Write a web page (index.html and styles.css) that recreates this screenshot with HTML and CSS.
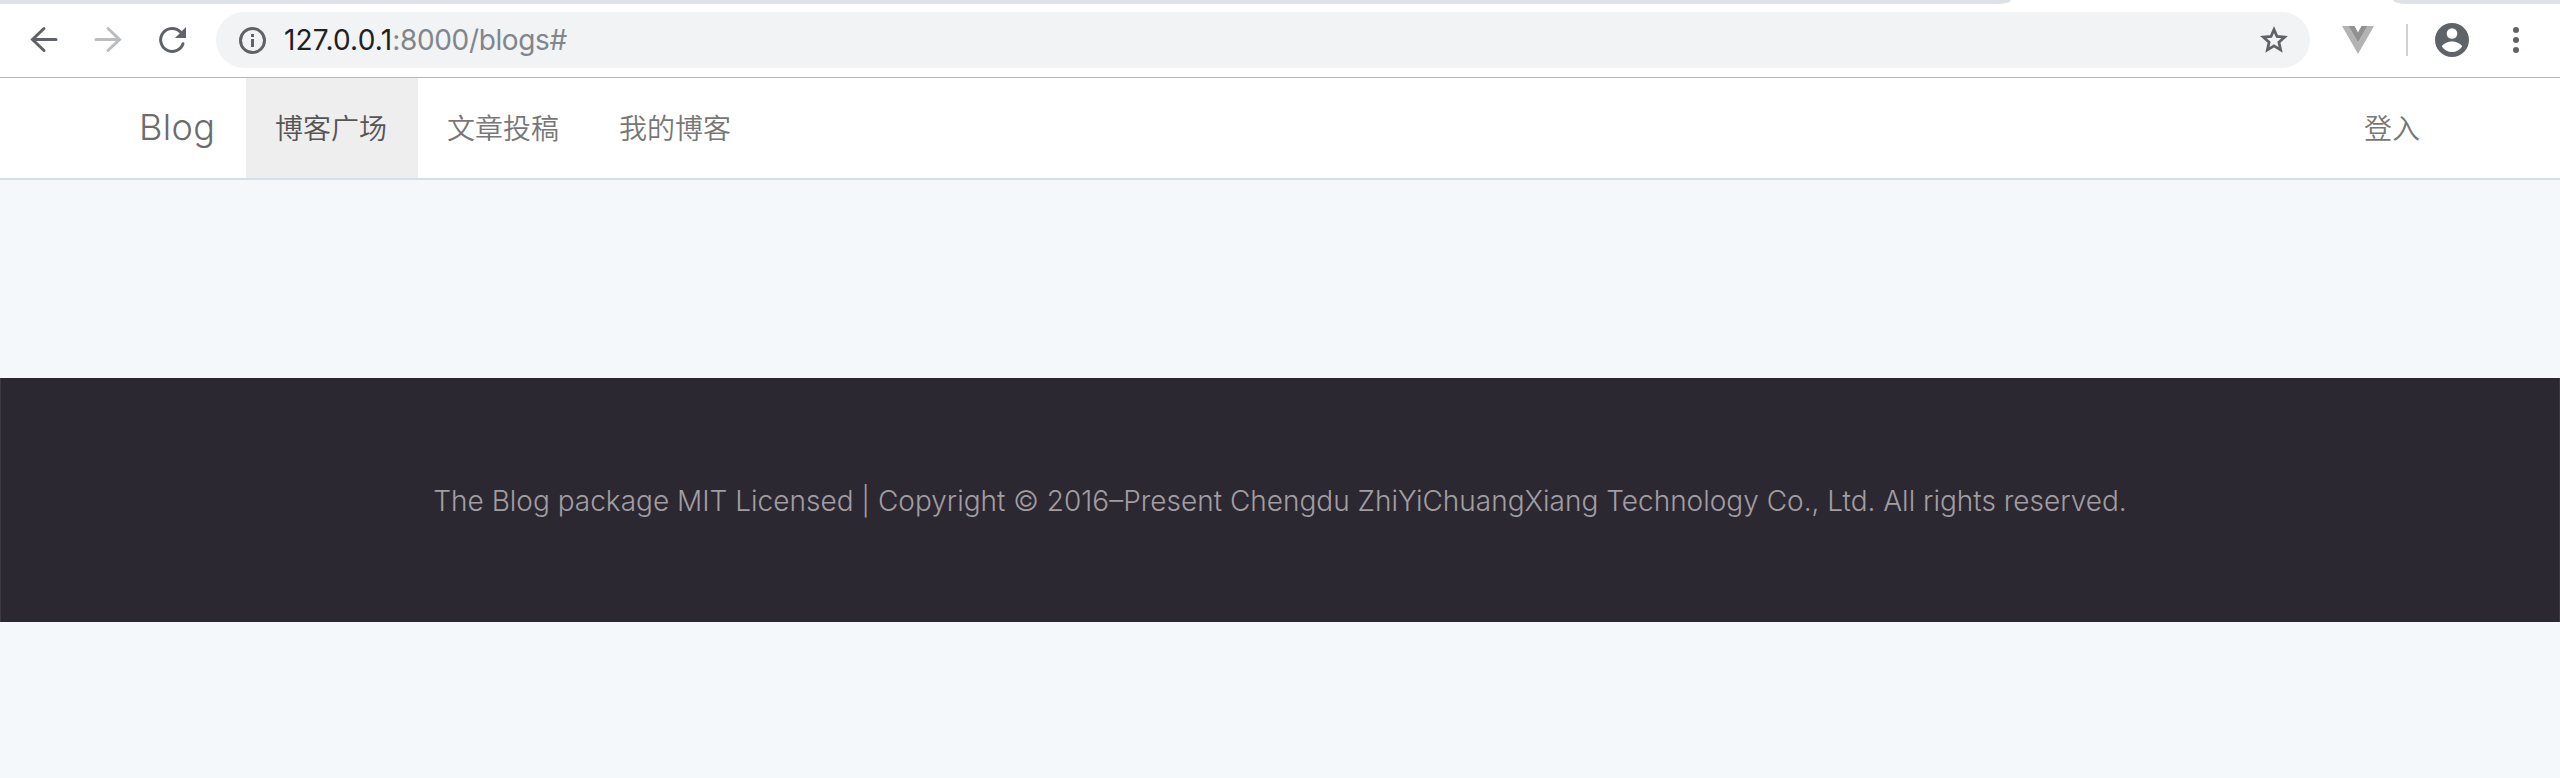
FILE: index.html
```html
<!DOCTYPE html>
<html lang="zh-CN">
<head>
<meta charset="utf-8">
<title>Blog</title>
<link rel="stylesheet" href="styles.css">
</head>
<body>
<header class="browser">
  <div class="tabstrip"><span class="tabs-left"></span><span class="tabs-right"></span></div>
  <div class="toolbar">
    <svg class="icon back" viewBox="0 0 32 32"><path d="M28 15.500H5M16 4.500l-11.500 11 11.500 11"/></svg>
    <svg class="icon forward" viewBox="0 0 32 32"><path d="M4 15.500h23M16 4.500l11.500 11-11.500 11"/></svg>
    <svg class="icon reload" viewBox="0 0 32 32"><path d="M27 19.700A11.500 11.500 0 1 1 24.500 8"/><path class="solid" d="M30 3v11H19z"/></svg>
    <div class="omnibox">
      <svg class="info" viewBox="0 0 32 32"><circle cx="16.500" cy="16.500" r="12"/><path d="M16.500 15v8M16.500 10v3"/></svg>
      <span class="url"><span class="host">127.0.0.1</span><span class="path">:8000/blogs#</span></span>
      <svg class="star" viewBox="0 0 32 32"><path d="m16 5.500 3 7 7.600.7-5.700 5.100 1.700 7.600-6.600-4-6.600 4 1.700-7.600-5.700-5.100 7.600-.7z"/></svg>
    </div>
    <svg class="vue" viewBox="0 0 32 28"><path fill="#b3b3b3" d="M0 0h6.500L16 16.500 25.500 0H32L16 28z"/><path fill="#919191" d="M6.500 0h6L16 6.500 19.500 0h6L16 16.500z"/></svg>
    <span class="divider"></span>
    <svg class="avatar" viewBox="0 0 34 34"><circle cx="17" cy="17" r="17" fill="#5f6368"/><circle cx="17" cy="10.500" r="5.300" fill="#fff"/><path fill="#fff" d="M6.800 23.500c2-3.500 6.400-5 10.200-5s8.200 1.500 10.200 5c-2.300 3.500-6 5.500-10.200 5.500s-7.900-2-10.200-5.500z"/></svg>
    <svg class="menu" viewBox="0 0 6 26"><circle cx="3" cy="3" r="3"/><circle cx="3" cy="13" r="3"/><circle cx="3" cy="23" r="3"/></svg>
  </div>
</header>
<nav class="navbar">
  <a class="brand">Blog</a>
  <a class="item active">博客广场</a>
  <a class="item">文章投稿</a>
  <a class="item">我的博客</a>
  <a class="item login">登入</a>
</nav>
<main class="content"></main>
<footer class="footer"><span class="legal">The Blog package MIT Licensed | Copyright © 2016–Present Chengdu ZhiYiChuangXiang Technology Co., Ltd. All rights reserved.</span></footer>
</body>
</html>
```
FILE: styles.css
```css
* { box-sizing: border-box; }
body { margin: 0; height: 778px; background: #f5f8fa; overflow: hidden; font-family: Inter, "Noto Sans CJK SC", sans-serif; }
svg { flex: none; display: block; }
.browser { height: 78px; background: #fff; border-bottom: 1px solid #b5b6b7; }
.tabstrip { display: flex; justify-content: space-between; height: 4px; }
.tabs-left { width: 2011px; background: #dee1e6; border-bottom-right-radius: 14px 4px; }
.tabs-right { width: 167px; background: #dee1e6; border-bottom-left-radius: 14px 4px; }
.toolbar { display: flex; align-items: center; height: 72px; padding-left: 28px; }
.icon { width: 32px; height: 32px; margin-right: 32px; fill: none; stroke: #5f6368; stroke-width: 3; stroke-linecap: round; }
.forward { stroke: #babcbe; }
.reload { margin-right: 28px; }
.icon .solid { fill: #5f6368; stroke: none; }
.omnibox { display: flex; align-items: center; width: 2094px; height: 56px; padding: 0 20px; border-radius: 28px; background: #f1f3f4; }
.info, .star { width: 32px; height: 32px; fill: none; stroke: #5f6368; stroke-width: 3; }
.star { stroke-width: 2.800; }
.url { flex: 1; margin-left: 16px; font-size: 28px; white-space: nowrap; }
.host { color: #202124; letter-spacing: .2px; }
.path { color: #80868b; letter-spacing: -.35px; }
.vue { width: 32px; height: 28px; margin-left: 32px; }
.divider { width: 2px; height: 32px; margin: 0 27px 0 32px; background: #cfd1d3; }
.avatar { width: 34px; height: 34px; }
.menu { width: 6px; height: 26px; margin-left: 44px; fill: #5f6368; }
.navbar { display: flex; height: 102px; padding: 0 110px; background: #fff; border-bottom: 2px solid #d3e0e9; color: #777; line-height: 100px; }
.brand { width: 136px; padding-left: 29px; color: #6c6c6c; font-size: 36px; font-weight: 300; letter-spacing: .4px; line-height: 99px; }
.item { padding: 0 31px 0 29px; font: 350 28px/98px "Noto Sans CJK SC", sans-serif; }
.active { background: #eee; color: #555; }
.login { margin-left: auto; padding: 0 30px; }
.content { height: 198px; }
.footer { display: flex; align-items: center; justify-content: center; height: 244px; padding-top: 2px; background: #2c2831; border: 1px solid #3b3840; border-width: 0 1px; color: #a19ea2; font-size: 28px; font-weight: 300; }
.legal { white-space: nowrap; }
```
